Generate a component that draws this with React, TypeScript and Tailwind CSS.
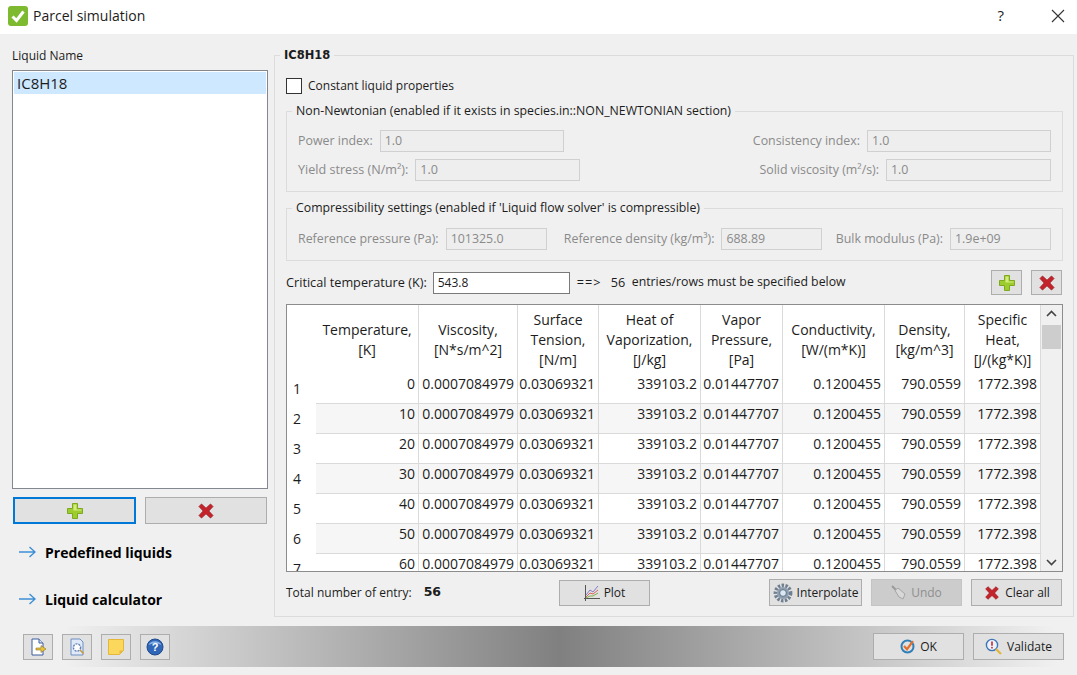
import React from 'react';

const COLUMNS = ['w-[103px]', 'w-[99px]', 'w-[81px]', 'w-[102px]', 'w-[82px]', 'w-[102px]', 'w-[80px]', 'w-[76px]'];

const HEADERS = [
  ['Temperature,', '[K]'],
  ['Viscosity,', '[N*s/m^2]'],
  ['Surface', 'Tension,', '[N/m]'],
  ['Heat of', 'Vaporization,', '[J/kg]'],
  ['Vapor', 'Pressure,', '[Pa]'],
  ['Conductivity,', '[W/(m*K)]'],
  ['Density,', '[kg/m^3]'],
  ['Specific', 'Heat,', '[J/(kg*K)]'],
];

const VALUES = ['0.0007084979', '0.03069321', '339103.2', '0.01447707', '0.1200455', '790.0559', '1772.398'];
const ROWS = [0, 10, 20, 30, 40, 50, 60];

const PlusIcon = () => (
  <svg width="20" height="20" viewBox="0 0 20 20">
    <path d="M7.5 2.5h5v5h5v5h-5v5h-5v-5h-5v-5h5z" fill="#9ccc2e" stroke="#7fa821" strokeWidth="1" />
    <path d="M8.5 3.5h3v5h5v1h-8z" fill="#d4ec7c" />
  </svg>
);

const CrossIcon = ({ size = 20 }: { size?: number }) => (
  <svg width={size} height={size} viewBox="0 0 20 20">
    <path d="M3 5.5 5.5 3 10 7.2 14.5 3 17 5.5 12.8 10 17 14.5 14.5 17 10 12.8 5.5 17 3 14.5 7.2 10z" fill="#c4232b" stroke="#9b1b20" strokeWidth="0.8" />
  </svg>
);

const ArrowIcon = () => (
  <svg width="17" height="12" viewBox="0 0 17 12" fill="none" stroke="#3d8fd6" strokeWidth="1.4">
    <path d="M0 6h15.5M10.5 1l5.5 5-5.5 5" />
  </svg>
);

const ExportIcon = () => (
  <svg width="18" height="18" viewBox="0 0 18 18">
    <path d="M3 1h7l4 4v12H3z" fill="#fff" stroke="#3d5c9c" />
    <path d="M10 1v4h4" fill="#d6e2f5" stroke="#3d5c9c" />
    <path d="M7 10h5V7.5l5 3.5-5 3.5V12H7z" fill="#e8c23c" stroke="#8a7426" strokeWidth="0.6" />
  </svg>
);

const ReportIcon = () => (
  <svg width="18" height="18" viewBox="0 0 18 18">
    <path d="M3 1h9l3 3v13H3z" fill="#dfe9f7" stroke="#6f8fc2" />
    <circle cx="9" cy="9.5" r="3.6" fill="#fff" stroke="#5f7fb5" strokeWidth="1.4" strokeDasharray="2 1" />
    <path d="m12 12 3.5 3.5" stroke="#c79a3a" strokeWidth="1.6" />
  </svg>
);

const NoteIcon = () => (
  <svg width="18" height="18" viewBox="0 0 18 18">
    <path d="M1.5 1.5h15v11l-4 4h-11z" fill="#fbd75b" stroke="#e4b73c" />
    <path d="m16.5 12.5-4 4v-4z" fill="#e6b93f" />
  </svg>
);

const HelpIcon = () => (
  <svg width="18" height="18" viewBox="0 0 18 18">
    <circle cx="9" cy="9" r="8" fill="#2f66b8" stroke="#1f4a8c" />
    <path d="M2.5 7A7 6 0 0 1 15.5 7 10 5 0 0 0 2.5 7z" fill="#8db4e8" />
    <text x="9" y="13" textAnchor="middle" fontSize="11" fontWeight="700" fill="#fff" fontFamily="Liberation Sans, sans-serif">?</text>
  </svg>
);

const PlotIcon = () => (
  <svg width="16" height="18" viewBox="0 0 16 18" fill="none">
    <path d="M1.5 1v16M0 14.5h16" stroke="#555" />
    <path d="M2 11 6 6l3 2 5-6" stroke="#8a78c4" />
    <path d="m2 13 4-4 3 1 5-4" stroke="#d9625a" />
    <path d="m2 14 4-2 3 0 5-3" stroke="#7fb04a" />
  </svg>
);

const GearIcon = () => (
  <svg width="20" height="20" viewBox="0 0 20 20">
    <circle cx="10" cy="10" r="7.6" fill="none" stroke="#6f7f90" strokeWidth="3.6" strokeDasharray="2.4 1.4" />
    <circle cx="10" cy="10" r="6" fill="#8e9dae" />
    <circle cx="10" cy="10" r="3.4" fill="#dce8f4" stroke="#5f7387" />
  </svg>
);

const BroomIcon = () => (
  <svg width="16" height="16" viewBox="0 0 16 16">
    <path d="M1 1l4 4" stroke="#9a9a9a" strokeWidth="2" />
    <path d="M4 5.5 7 3l7 6-2 5-4-2z" fill="#d8d8d8" stroke="#a5a5a5" />
  </svg>
);

const OkIcon = () => (
  <svg width="15" height="15" viewBox="0 0 15 15" fill="none">
    <circle cx="7.5" cy="7.5" r="6" stroke="#2f7fb8" strokeWidth="2" />
    <path d="m4 7 3 3.2 6-8" stroke="#e0702c" strokeWidth="2.2" />
  </svg>
);

const ValidateIcon = () => (
  <svg width="18" height="18" viewBox="0 0 18 18">
    <circle cx="7" cy="7" r="5.6" fill="#eaf2fb" stroke="#3f74b8" strokeWidth="1.4" />
    <path d="M7 3.5v4.2" stroke="#c9262c" strokeWidth="1.6" />
    <circle cx="7" cy="9.7" r="0.9" fill="#c9262c" />
    <path d="m11 11 5 5" stroke="#e0b63c" strokeWidth="2.2" />
  </svg>
);

const Button = ({ className, children }: { className: string; children: React.ReactNode }) => (
  <div className={`flex items-center justify-center border border-[#adadad] bg-[#e1e1e1] ${className}`}>{children}</div>
);

const DisabledField = ({ label, value, width, className = '' }: { label: string; value: string; width: string; className?: string }) => (
  <div className={`flex items-center text-[12.4px] text-[#8a8a8a] ${className}`}>
    <span>{label}</span>
    <div className={`ml-[7px] flex h-[22px] items-center border border-[#d0d0d0] bg-[#eeeeee] pl-[4px] ${width}`}>{value}</div>
  </div>
);

export default function App() {
  return (
    <div className="flex h-[675px] w-[1077px] flex-col overflow-hidden bg-[#f0f0f0] font-['Open_Sans',sans-serif] text-[12px] text-[#1c1c1c]">
      {/* title bar */}
      <div className="flex h-[34px] shrink-0 items-center bg-white pb-[3px] pl-[8px]">
        <svg width="20" height="20" viewBox="0 0 20 20">
          <rect width="20" height="20" rx="3" fill="#7dba2f" />
          <path d="m4.5 10.5 4 4 7-9" fill="none" stroke="#fff" strokeWidth="3" />
        </svg>
        <span className="ml-[5px] text-[14px]">Parcel simulation</span>
        <span className="ml-auto mr-[47px] text-[15px]">?</span>
        <svg className="mr-[12px]" width="14" height="14" viewBox="0 0 14 14" stroke="#333" strokeWidth="1.1">
          <path d="m1 1 12 12M13 1 1 13" />
        </svg>
      </div>

      <div className="flex h-[592px] shrink-0">
        {/* liquid list */}
        <div className="flex w-[274px] shrink-0 flex-col pl-[12px] pr-[6px] pt-[14px]">
          <div className="h-[16px] leading-[16px]">Liquid Name</div>
          <div className="mt-[6px] h-[419px] border border-[#828790] bg-white p-[1px]">
            <div className="h-[22px] bg-[#cde8ff] pl-[3px] text-[15px] leading-[22px]">IC8H18</div>
          </div>
          <div className="ml-[1px] mt-[8px] flex justify-between pr-[1px]">
            <Button className="h-[27px] w-[123px] !border-2 !border-[#0078d7]"><PlusIcon /></Button>
            <Button className="h-[27px] w-[122px]"><CrossIcon /></Button>
          </div>
          <div className="ml-[7px] mt-[18px] flex h-[20px] items-center gap-[9px] text-[14px] font-bold text-black">
            <ArrowIcon />
            <span>Predefined liquids</span>
          </div>
          <div className="ml-[7px] mt-[27px] flex h-[20px] items-center gap-[9px] text-[14px] font-bold text-black">
            <ArrowIcon />
            <span>Liquid calculator</span>
          </div>
        </div>

        {/* properties */}
        <fieldset className="mt-[13px] h-[570px] w-[800px] border border-[#dcdcdc] pl-[11px] pr-[10px]">
          <legend className="ml-[-6px] h-[16px] px-[4px] font-['DejaVu_Sans',sans-serif] text-[11.5px] font-bold leading-[16px]">IC8H18</legend>

          <div className="mt-[15px] flex h-[16px] items-center">
            <div className="h-[16px] w-[16px] border border-[#333] bg-white" />
            <span className="ml-[6px]">Constant liquid properties</span>
          </div>

          <fieldset className="mt-[9px] h-[89px] border border-[#dcdcdc] px-[11px]">
            <legend className="ml-[-6px] h-[16px] px-[4px] text-[12.3px] leading-[16px]">Non-Newtonian (enabled if it exists in species.in::NON_NEWTONIAN section)</legend>
            <div className="mt-[11px] flex justify-between">
              <DisabledField label="Power index:" value="1.0" width="w-[184px]" />
              <DisabledField label="Consistency index:" value="1.0" width="w-[184px]" />
            </div>
            <div className="mt-[7px] flex justify-between">
              <DisabledField label="Yield stress (N/m²):" value="1.0" width="w-[165px]" className="text-[12.6px]" />
              <DisabledField label="Solid viscosity (m²/s):" value="1.0" width="w-[165px]" />
            </div>
          </fieldset>

          <fieldset className="mt-[8px] h-[61px] border border-[#dcdcdc] px-[11px]">
            <legend className="ml-[-6px] h-[16px] px-[4px] text-[12.3px] leading-[16px]">Compressibility settings (enabled if 'Liquid flow solver' is compressible)</legend>
            <div className="mt-[12px] flex justify-between">
              <DisabledField label="Reference pressure (Pa):" value="101325.0" width="w-[101px]" />
              <DisabledField label="Reference density (kg/m³):" value="688.89" width="w-[101px]" className="ml-[4px]" />
              <DisabledField label="Bulk modulus (Pa):" value="1.9e+09" width="w-[101px]" />
            </div>
          </fieldset>

          <div className="mt-[9px] flex h-[25px] items-center text-[12.7px]">
            <span>Critical temperature (K):</span>
            <div className="ml-[6px] flex h-[22px] w-[137px] items-center border border-[#7a7a7a] bg-white pl-[4px] text-[12px]">543.8</div>
            <span className="ml-[7px] w-[34px] tracking-[1px]">==&gt;</span>
            <span className="w-[21px]">56</span>
            <span className="text-[12.3px]">entries/rows must be specified below</span>
            <Button className="ml-auto h-[25px] w-[31px]"><PlusIcon /></Button>
            <Button className="ml-[9px] mr-[1px] h-[25px] w-[31px]"><CrossIcon /></Button>
          </div>

          {/* table */}
          <div className="mt-[9px] flex h-[268px] border border-[#8c8c8c] bg-white text-[14px]">
            <div className="flex-1 overflow-hidden">
              <div className="flex h-[69px]">
                <div className="w-[29px]" />
                {HEADERS.map((lines, i) => (
                  <div key={i} className={`flex flex-col items-center justify-center border-r border-[#dadada] text-center leading-[20px] ${COLUMNS[i]}`}>
                    {lines.map((line) => (
                      <div key={line} className="whitespace-nowrap">{line}</div>
                    ))}
                  </div>
                ))}
              </div>
              {ROWS.map((temp, r) => (
                <div key={temp} className="flex h-[30px]">
                  <div className="w-[29px] pl-[6px] pt-[4px] leading-[22px]">{r + 1}</div>
                  <div className={`flex border-b border-[#dadada] ${r % 2 ? 'bg-[#f6f6f6]' : 'bg-white'}`}>
                    {[String(temp), ...VALUES].map((value, i) => (
                      <div key={i} className={`whitespace-nowrap border-r border-[#dadada] pr-[3px] text-right leading-[20px] ${COLUMNS[i]}`}>
                        {value}
                      </div>
                    ))}
                  </div>
                </div>
              ))}
            </div>
            <div className="flex w-[21px] shrink-0 flex-col items-center bg-[#f0f0f0]">
              <svg className="mt-[5px]" width="11" height="7" viewBox="0 0 11 7" fill="none" stroke="#444" strokeWidth="1.6">
                <path d="m1 6 4.5-4.5L10 6" />
              </svg>
              <div className="mt-[8px] h-[24px] w-[19px] bg-[#cdcdcd]" />
              <svg className="mb-[5px] mt-auto" width="11" height="7" viewBox="0 0 11 7" fill="none" stroke="#444" strokeWidth="1.6">
                <path d="m1 1 4.5 4.5L10 1" />
              </svg>
            </div>
          </div>

          <div className="mt-[7px] flex h-[27px] items-center">
            <div className="flex w-[273px] items-center">
              <span>Total number of entry:</span>
              <span className="ml-[12px] font-['DejaVu_Sans',sans-serif] text-[12.5px] font-bold">56</span>
            </div>
            <Button className="h-[26px] w-[91px] gap-[4px]"><PlotIcon />Plot</Button>
            <Button className="ml-[119px] h-[27px] w-[93px] gap-[4px]"><GearIcon />Interpolate</Button>
            <Button className="ml-[9px] h-[27px] w-[91px] gap-[4px] !border-[#c4c4c4] !bg-[#cccccc] text-[#8f8f8f]"><BroomIcon />Undo</Button>
            <Button className="ml-[9px] h-[27px] w-[91px] gap-[4px]"><CrossIcon size={18} />Clear all</Button>
          </div>
        </fieldset>
      </div>

      {/* bottom bar */}
      <div className="flex h-[41px] shrink-0 items-center bg-[linear-gradient(90deg,#f0f0f0_6%,#808080_52%,#f0f0f0_98%)] pl-[23px] pr-[13px]">
        <div className="flex gap-[9px]">
          <Button className="h-[26px] w-[30px]"><ExportIcon /></Button>
          <Button className="h-[26px] w-[30px]"><ReportIcon /></Button>
          <Button className="h-[26px] w-[30px]"><NoteIcon /></Button>
          <Button className="h-[26px] w-[30px]"><HelpIcon /></Button>
        </div>
        <Button className="ml-auto h-[27px] w-[91px] gap-[5px]"><OkIcon />OK</Button>
        <Button className="ml-[9px] h-[27px] w-[91px] gap-[4px]"><ValidateIcon />Validate</Button>
      </div>
    </div>
  );
}
